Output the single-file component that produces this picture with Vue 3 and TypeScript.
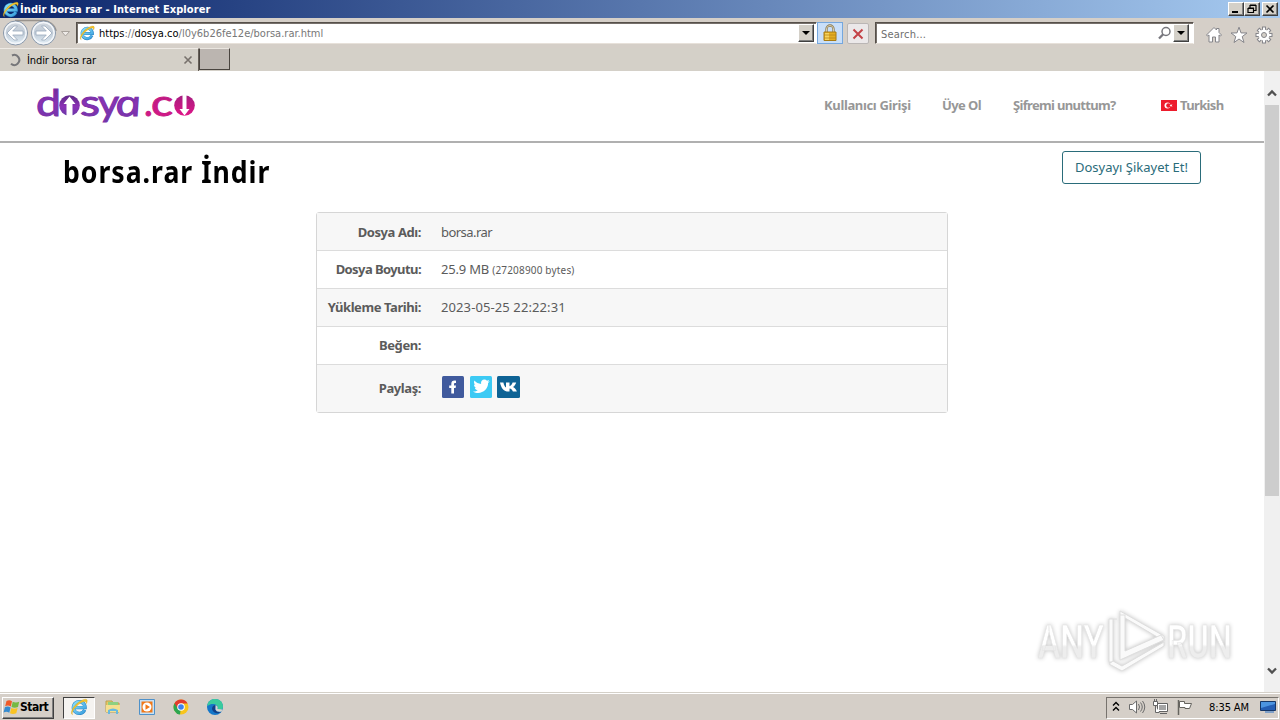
<script setup lang="ts">
interface Row { label: string; value?: string; note?: string; share?: boolean }
const rows: Row[] = [
  { label: 'Dosya Adı:', value: 'borsa.rar' },
  { label: 'Dosya Boyutu:', value: '25.9 MB', note: '(27208900 bytes)' },
  { label: 'Yükleme Tarihi:', value: '2023-05-25 22:22:31' },
  { label: 'Beğen:' },
  { label: 'Paylaş:', share: true },
]
const gearTeeth: number[] = [0, 45, 90, 135, 180, 225, 270, 315]
</script>

<template>
  <svg class="defs" width="0" height="0" aria-hidden="true">
    <defs>
      <linearGradient id="ieBlue" x1="0" y1="0" x2="1" y2="1">
        <stop offset="0" stop-color="#8be0fa" /><stop offset="1" stop-color="#3a9fdf" />
      </linearGradient>
      <symbol id="ie" viewBox="0 0 16 16">
        <path d="M13 10.500A5.200 5.200 0 1 1 13.400 8.600H4.500" fill="none" stroke="#2c85c4" stroke-width="3" />
        <path d="M12.800 10.600A5.100 5.100 0 1 1 13.300 8.500H4.500" fill="none" stroke="url(#ieBlue)" stroke-width="2.200" />
        <path d="M2.200 14.800C-.5 13.500 3 7 8 3.600C11.500 1 15.300.1 15.300 2.500c0 .9-.3 1.700-.8 2.500C14.800 2.200 12 2.600 9 4.700C4 8.200 1.200 12.500 2.200 14.800Z" fill="#f6c52c" stroke="#c99b1b" stroke-width=".3" />
      </symbol>
    </defs>
  </svg>

  <div class="screen">
    <header class="titlebar">
      <svg class="title-icon" width="17" height="17"><use href="#ie" /></svg>
      <span class="title-text">İndir borsa rar - Internet Explorer</span>
      <div class="window-buttons">
        <i class="wbtn"><svg width="12" height="10"><path d="M2 8h6" stroke="#000" stroke-width="2" /></svg></i>
        <i class="wbtn"><svg width="12" height="10"><path d="M4 4V1.500h6V6.500H8M4 1h6M2 4.500h5.500v4H2zM2 4h6" fill="none" stroke="#000" stroke-width="1.200" /></svg></i>
        <i class="wbtn close"><svg width="12" height="10"><path d="M2.500 1.500l7 7m0-7l-7 7" stroke="#000" stroke-width="1.700" /></svg></i>
      </div>
    </header>

    <div class="toolbar">
      <svg class="nav-arrows" width="76" height="30" viewBox="0 0 76 30">
        <defs><linearGradient id="disc" x2="0" y2="1"><stop offset="0" stop-color="#d3d8de" /><stop offset=".5" stop-color="#c0cbd7" /><stop offset="1" stop-color="#e4f0f8" /></linearGradient></defs>
        <path d="M15 2.500H44C49 3 55 7 56 13" fill="none" stroke="#99938d" stroke-width="1.500" />
        <g stroke="#8796a9" fill="url(#disc)"><circle cx="15.500" cy="15" r="12" /><circle cx="43.500" cy="15" r="12" /></g>
        <g stroke="#f3f6fa" fill="none" stroke-width="1.500"><circle cx="15.500" cy="15" r="10.600" /><circle cx="43.500" cy="15" r="10.600" /></g>
        <g fill="#fff" stroke="#9aa9bd" stroke-width=".8">
          <path d="M7 15l7-7h3.500l-4.800 5H23v4H12.700l4.800 5H14z" /><path d="M52 15l-7-7h-3.500l4.800 5H36v4h10.300l-4.800 5H45z" />
        </g>
        <path d="M61.500 13.500h8l-4 4.500z" fill="#eeeae7" stroke="#a9a39d" />
      </svg>
      <div class="address">
        <svg width="16" height="16"><use href="#ie" /></svg>
        <span class="url"><b>https</b>://<b>dosya.co</b>/l0y6b26fe12e/borsa.rar.html</span>
        <i class="drop"></i>
      </div>
      <i class="lock">
        <svg width="16" height="18" viewBox="0 0 16 18"><path d="M4.500 9V5a3.500 3.500 0 0 1 7 0v4" fill="none" stroke="#877854" stroke-width="2.300" /><path d="M4.500 9V5a3.500 3.500 0 0 1 7 0v4" fill="none" stroke="#d9cda9" stroke-width="1" /><path d="M2 8h12v8.500H2z" fill="#e5ae21" stroke="#a77a13" /><path d="M3 9h4v7H3z" fill="#f7d45c" /><path d="M2 11h12M2 14h12" stroke="#b9851a" stroke-width=".8" /></svg>
      </i>
      <i class="stop"><svg width="12" height="12"><path d="M1.500 1.500l9 9m0-9l-9 9" stroke="#c34247" stroke-width="2" /></svg></i>
      <div class="search">
        <span>Search...</span>
        <svg width="15" height="15"><circle cx="9" cy="5.500" r="4" fill="none" stroke="#77777d" stroke-width="1.500" /><path d="M6.200 8.300L2 12.500" stroke="#77777d" stroke-width="2.300" /></svg>
        <i class="drop"></i>
      </div>
      <div class="tools">
        <svg width="18" height="18" viewBox="0 0 18 18"><path d="M1.500 9L9 1.500l2.500 2.500V2.500h2.500v4L16.500 9l-1 1-1.500-1v7H10.500v-5h-3v5H4V9l-1.500 1z" fill="#fff" stroke="#85858a" /></svg>
        <svg width="18" height="18" viewBox="0 0 18 18"><path d="M9 1.200l2 5.700 6 .1-4.800 3.600 1.800 5.900L9 13l-5 3.500 1.800-5.900L1 7l6-.1z" fill="#fff" stroke="#85858a" /></svg>
        <svg width="18" height="18" viewBox="0 0 18 18"><g fill="#fff" stroke="#85858a"><rect v-for="a in gearTeeth" :key="a" x="7.500" y="1" width="3" height="4" :transform="`rotate(${a} 9 9)`" /><circle cx="9" cy="9" r="5.500" stroke="none" /><circle cx="9" cy="9" r="2.500" fill="#d4d0c8" /></g></svg>
      </div>
    </div>

    <div class="tabs">
      <div class="tab">
        <svg width="14" height="14"><path d="M4 2.500A5 5 0 1 1 3 10.800" fill="none" stroke="#77777a" stroke-width="2" /></svg>
        <span>İndir borsa rar</span>
        <svg class="tab-close" width="10" height="10"><path d="M1.500 1.500l7 7m0-7l-7 7" stroke="#77716c" stroke-width="1.600" /></svg>
      </div>
      <div class="new-tab"></div>
    </div>

    <div class="viewport">
      <div class="page">
        <div class="site-head">
          <svg class="logo" width="162" height="38" viewBox="0 0 162 38" role="img" aria-label="dosya.co">
            <defs>
              <linearGradient id="violet" x2="0" y2="1"><stop offset="0" stop-color="#5e2a86" /><stop offset=".55" stop-color="#8b31b6" /><stop offset="1" stop-color="#6939a6" /></linearGradient>
              <linearGradient id="pink" x2="0" y2="1"><stop offset="0" stop-color="#a51d80" /><stop offset="1" stop-color="#df1688" /></linearGradient>
            </defs>
            <g class="letters violet">
              <text x="1" y="28.500" textLength="25" lengthAdjust="spacingAndGlyphs">d</text>
              <text x="45" y="28.500" textLength="20" lengthAdjust="spacingAndGlyphs">s</text>
              <text x="63" y="28.500" textLength="21" lengthAdjust="spacingAndGlyphs">y</text>
              <text class="round-a" transform="translate(82 28.500) skewX(12)" textLength="26" lengthAdjust="spacingAndGlyphs">a</text>
            </g>
            <g class="letters pink">
              <text x="109" y="28.500">.</text>
              <text x="116" y="28.500" textLength="22" lengthAdjust="spacingAndGlyphs">c</text>
            </g>
            <circle cx="34.500" cy="18.500" r="10.300" fill="url(#violet)" />
            <path d="M34.500 9.500l6 7.500h-3v12h-6V17h-3z" fill="#fff" />
            <circle cx="149.500" cy="18.500" r="10.300" fill="url(#pink)" />
            <path d="M147.500 8h4v14h3l-5 6.500-5-6.500h3z" fill="#fff" />
          </svg>
          <nav>
            <a class="login">Kullanıcı Girişi</a><a class="join">Üye Ol</a><a class="forgot">Şifremi unuttum?</a>
            <a class="lang"><svg width="16" height="11"><path d="M0 0h16v11H0z" fill="#ed1c2c" /><circle cx="6.500" cy="5.500" r="3" fill="#fff" /><circle cx="7.400" cy="5.500" r="2.200" fill="#ed1c2c" /><path d="M8.500 5.500l3-1.300-.8 1.300.8 1.300z" fill="#fff" /></svg>Turkish</a>
          </nav>
        </div>
        <div class="heading"><h1>borsa.rar İndir</h1><button>Dosyayı Şikayet Et!</button></div>
        <div class="info">
          <div v-for="(row, i) in rows" :key="row.label" :class="['row', 'r' + i, { alt: i % 2 === 0, tall: row.share }]">
            <strong>{{ row.label }}</strong>
            <span v-if="row.value" class="value">{{ row.value }} <small v-if="row.note">{{ row.note }}</small></span>
            <div v-if="row.share" class="share">
              <svg width="24" height="24"><rect x="1" y="1" width="22" height="22" rx="1.500" fill="#405a9d" /><path d="M10.300 18.500V13H8.200v-2.500h2.100V9c0-2.600 1.400-3.700 4.700-3.300V8c-1.500-.1-2 .1-2 1.200v1.300h2l-.4 2.500H13v5.500z" fill="#fff" /></svg>
              <svg width="24" height="24"><rect x="1" y="1" width="22" height="22" rx="1.500" fill="#3ccaf4" /><path d="M4 16.500c2 .2 3.500-.3 4.800-1.300-1.500-.1-2.400-.9-2.900-2.200h1.400C5.700 12.300 5 11.100 5 9.500l1.300.4C5 8.700 4.600 7.100 5.500 5.500c1.800 2.100 3.900 3.200 6.600 3.400-.5-2.500 1.100-4.300 3.300-4.300 1 0 1.900.4 2.600 1.100l2.300-.9-1.500 2 2-.5-1.700 1.800c.2 6.800-7.900 12.900-15.100 8.400z" fill="#fff" /></svg>
              <svg width="24" height="24"><rect x="0" y="1" width="23" height="22" rx="1.500" fill="#0e6395" /><path d="M3 7.500h3.400c.5 2.400 1.300 4 2.600 5V7.500h3.500v3.800c1.300-.3 2.400-1.800 3.100-3.800h3.600c-.5 1.900-1.600 3.500-3.200 4.500 1.800.9 3 2.400 3.900 4.500h-4c-.6-1.600-1.600-2.700-3.400-3v3C7.300 17 4.200 13.700 3 7.500z" fill="#fff" /></svg>
            </div>
          </div>
        </div>
        <svg class="watermark" width="208" height="72" viewBox="0 0 208 72">
          <defs><linearGradient id="fade" x2="0" y2="1"><stop offset=".55" stop-color="#fff" /><stop offset=".6" stop-color="#ededed" /></linearGradient></defs>
          <g class="mark-text"><text x="9" y="54" textLength="66" lengthAdjust="spacingAndGlyphs">ANY</text><text x="138" y="54" textLength="65" lengthAdjust="spacingAndGlyphs">RUN</text></g>
          <g class="mark-lines">
            <path d="M91 7L135 32v5L91 11z" /><path d="M91 11h5v36l36-16 3 5-44 20z" /><path d="M84 15h-4v43h4zM84 15h4" /><path d="M80 60l13 7 42-25v-4L93 62l-9-5z" />
          </g>
        </svg>
      </div>
      <div class="scrollbar">
        <svg width="16" height="34"><path d="M4 24.500l4-4 4 4" fill="none" stroke="#505050" stroke-width="2.300" /></svg>
        <i></i>
        <svg class="down" width="16" height="34"><path d="M4 10.500l4 4 4-4" fill="none" stroke="#505050" stroke-width="2.300" /></svg>
      </div>
    </div>

    <footer class="taskbar">
      <div class="start">
        <svg width="17" height="17" viewBox="0 0 17 17"><path d="M3.500 2q3-1.500 5.500.3L7.800 7.500Q5 5.800 2.200 7.300z" fill="#f05a28" /><path d="M9.700 2.700q3 1.500 6.500 0L15 8q-3.500 1.500-6.500 0z" fill="#75b943" /><path d="M1.900 8.200q3-1.500 5.700.3L6.300 13.700Q3.500 12 .6 13.500z" fill="#368bd0" /><path d="M8.300 8.900q3 1.500 6.300 0l-1.300 5.300q-3.500 1.500-6.300 0z" fill="#fac323" /></svg>
        <span>Start</span>
      </div>
      <div class="task active"><svg width="18" height="18"><use href="#ie" /></svg></div>
      <div class="task"><svg width="18" height="18"><path d="M2 3h6l1 2h6v9H2z" fill="#e8c864" stroke="#baa04f" /><path d="M4 4h10v5H4z" fill="#8ed080" /><path d="M2 7h14v7H2z" fill="#f5df8e" /><path d="M4 16v-4q5-3 10 0v4h-2v-3H6v3z" fill="#69b9de" /></svg></div>
      <div class="task"><svg width="18" height="18"><path d="M1.500 1.500h15v15h-15z" fill="#c7e1f5" stroke="#4e91c9" /><path d="M3.500 3.500h11v11h-11z" fill="#f17818" /><circle cx="9" cy="9" r="4.500" fill="#fff" /><path d="M7.500 6.200l4.500 2.800-4.500 2.800z" fill="#f17818" /></svg></div>
      <div class="task"><svg width="18" height="18"><circle cx="9" cy="9" r="7.500" fill="#f8c51c" /><path d="M9 9L2.500 5.200A7.500 7.500 0 0 0 8 16.500z" fill="#2ca650" /><path d="M2.500 5.200A7.500 7.500 0 0 1 15.600 5.500H9L6 11z" fill="#e23b2e" /><circle cx="9" cy="9" r="3.800" fill="#fff" /><circle cx="9" cy="9" r="2.800" fill="#3e82ee" /></svg></div>
      <div class="task"><svg width="18" height="18"><circle cx="9" cy="9" r="8" fill="#1477c9" /><path d="M1.200 8C2 3 5 1 9 1c5 0 8 3.500 8 7.500 0 3-2.500 4-5.500 3.500C14 7 7 3.500 1.200 8z" fill="#3acb9d" /><path d="M10 7c-5 0-5.500 6.500 0 8 2 .5 4 0 5.500-1-2 .7-5-.2-6-2-.8-1.300.5-2 .5-5z" fill="#123f86" /><path d="M9.500 7q3 1 2 4l5 .5-1 2q-5 1-6-2z" fill="#d8d6d0" /></svg></div>
      <div class="tray">
        <svg class="chev" width="8" height="12"><path d="M1 4.500l3-3 3 3M1 9.500l3-3 3 3" fill="none" stroke="#000" stroke-width="1.400" /></svg>
        <svg class="sound" width="18" height="16"><path d="M1.500 5.500h3L8.500 2v12l-4-3.500h-3z" fill="#fff" stroke="#6b6b6b" /><path d="M10.500 5q2 3 0 6M12.500 3.500q3.500 4.500 0 9M14.500 2q4.500 6 0 12" fill="none" stroke="#6b6b6b" /></svg>
        <svg class="net" width="17" height="17"><path d="M5.500 4.500h10v8h-10zM8 14.500h7" fill="#fff" stroke="#626262" /><path d="M7 6h7v5H7z" fill="#a4a4a4" /><path d="M1.500 2.500h4v4h-4zM2.500 0v3m2-3v3M3.500 7v6.500h4" fill="#fff" stroke="#666" /></svg>
        <svg class="flag" width="17" height="17"><path d="M2.500 1v15" stroke="#66645f" stroke-width="1.500" /><path d="M3.500 2.500h5v2h7l-2 5H9v-1H3.500z" fill="#fff" stroke="#66645f" /></svg>
        <span class="clock">8:35 AM</span>
        <svg class="desktop" width="16" height="14"><path d="M.5 1.500h15v9H.5z" fill="#245db3" stroke="#163767" /><path d="M1 2h14v2L1 8z" fill="#4c94e0" /><path d="M5 12h9" stroke="#7fa0c8" stroke-width="2" /></svg>
      </div>
    </footer>
  </div>
</template>

<style>
html, body { margin: 0; overflow: hidden; }
</style>
<style scoped>
* { box-sizing: border-box; }
svg { display: block; flex: none; }
.defs { position: absolute; }
.screen { width: 1280px; height: 720px; display: flex; flex-direction: column; overflow: hidden; background: #d4d0c8; color: #000; font: 11px "DejaVu Sans Condensed", "DejaVu Sans", sans-serif; white-space: nowrap; }
.titlebar { height: 18px; flex: none; display: flex; align-items: center; padding: 0 2px; background: linear-gradient(90deg, #0a246a, #a6caf0); color: #fff; }
.title-text { margin-left: 1px; font-size: 11px; font-weight: bold; letter-spacing: .08px; }
.window-buttons { margin-left: auto; display: flex; }
.wbtn { width: 16px; height: 14px; display: flex; align-items: center; justify-content: center; background: #d4d0c8; border: 1px solid; border-color: #fff #404040 #404040 #fff; box-shadow: inset -1px -1px #808080; }
.close { margin-left: 2px; }
.toolbar { height: 30px; flex: none; display: flex; align-items: flex-start; background: #d5cfc8; }
.address, .search { height: 22px; margin-top: 4px; display: flex; align-items: center; background: #fff; border: 1px solid; border-color: #56504a #fff #e7e1da #56504a; box-shadow: inset 1px 1px #76706b; }
.address { width: 741px; padding-left: 2px; }
.url { margin: 1px 0 0 4px; color: #777; }
.url b { font-weight: normal; color: #000; }
.drop { width: 16px; height: 18px; margin-left: auto; margin-right: 2px; display: flex; align-items: center; justify-content: center; background: #d4d0c8; border: 1px solid; border-color: #fff #404040 #404040 #fff; box-shadow: inset -1px -1px #808080; }
.drop::after { content: ""; border: 4px solid transparent; border-top-color: #000; border-bottom: 0; }
.lock { width: 26px; height: 22px; margin: 4px 0 0; display: grid; place-items: center; background: #c9dff9; border: 1px solid #75a7de; }
.stop { width: 22px; height: 21px; margin: 5px 0 0 4px; display: grid; place-items: center; background: #ebe8e9; border: 1px solid #bab6b5; border-radius: 2px; }
.search { width: 319px; margin-left: 6px; padding-left: 5px; color: #6e6e6e; }
.search span { margin-top: 2px; letter-spacing: .2px; }
.search > svg { margin-left: auto; }
.search .drop { margin-left: 1px; margin-right: 4px; }
.tools { display: flex; gap: 7px; margin: 8px 0 0 11px; }
.tabs { height: 23px; display: flex; flex: none; }
.tab { width: 199px; display: flex; align-items: center; padding-left: 8px; border-top: 1px solid #eeeae5; border-right: 1px solid #665f58; }
.tab span { margin-left: 5px; letter-spacing: -.1px; }
.tab-close { margin-left: auto; margin-right: 5px; }
.new-tab { width: 31px; height: 22px; border: 1px solid #49443f; border-top-color: #e9e5df; background: #bbb5b0; }
.viewport { height: 621px; flex: none; display: flex; background: #fff; }
.page { width: 1264px; position: relative; font-family: "Noto Sans", "Open Sans", sans-serif; color: #5b5b5b; }
.site-head { height: 72px; padding: 16px 0 0 35px; display: flex; border-bottom: 2px solid #b0b0b0; }
.logo { overflow: visible; }
.letters { font: 400 37px/1 Lato, sans-serif; stroke-width: 1; }
.violet { fill: url(#violet); stroke: #7b31aa; }
.pink { fill: url(#pink); stroke: #c71b86; }
.round-a { font: italic 400 35px/1 "Open Sans", sans-serif; }
nav { display: flex; height: 36px; align-items: center; margin-left: 627px; color: #979797; font-size: 13px; font-weight: bold; }
.login { width: 118px; letter-spacing: -.35px; }
.join { width: 71px; letter-spacing: -.6px; }
.forgot { width: 148px; letter-spacing: -.68px; }
.lang { display: flex; align-items: center; gap: 3px; letter-spacing: -.65px; }
.heading { height: 69px; display: flex; justify-content: space-between; align-items: flex-start; padding: 8px 63px 0; }
h1 { margin: -2px 0 0; font-size: 30px; line-height: 46px; letter-spacing: 1.1px; color: #000; transform: scaleX(.888); transform-origin: 0 0; }
button { width: 139px; height: 33px; padding: 0 0 2px; background: #fff; border: 1px solid #2a6c7a; border-radius: 3px; color: #2a6c7a; font: 13px "Noto Sans", sans-serif; }
.info { width: 632px; margin-left: 316px; border: 1px solid #d6d6d6; border-radius: 3px; }
.row { height: 38px; display: flex; align-items: center; font-size: 13px; padding-bottom: 1px; }
.row + .row { border-top: 1px solid #dcdcdc; }
.alt { background: #f7f7f7; }
.row.r0 { height: 37px; padding: 1px 0 0; }
.row.tall { height: 48px; }
.row strong { width: 104px; text-align: right; font-size: 13px; letter-spacing: -.42px; }
.row.r1 strong { letter-spacing: -.58px; }
.value { margin-left: 20px; }
.r0 .value { letter-spacing: -.55px; }
.r1 .value { letter-spacing: -.2px; }
.r2 .value { letter-spacing: .1px; }
small { font-size: 10px; letter-spacing: .18px; }
.share { display: flex; gap: 4px; margin: -2px 0 0 20px; }
.watermark { position: absolute; right: 27px; bottom: 16px; overflow: visible; filter: drop-shadow(0 0 2px #c4c4c4); }
.mark-text { font: 500 47px/1 Roboto, sans-serif; fill: url(#fade); stroke: #e4e4e4; stroke-width: .6; }
.mark-lines { fill: #fafafa; stroke: #dedede; stroke-width: 1; }
.scrollbar { width: 16px; background: #f0f0f0; display: flex; flex-direction: column; }
.scrollbar i { height: 391px; margin: 0 0 0 1px; background: #cdcdcd; width: 14px; }
.down { margin-top: auto; }
.taskbar { height: 28px; flex: none; display: flex; align-items: center; padding: 2px 2px 0; border-top: 1px solid #d4d0c8; box-shadow: inset 0 1px #fff; background: #d5cfc8; }
.start { width: 52px; height: 22px; display: flex; align-items: center; border: 1px solid; border-color: #fff #404040 #404040 #fff; box-shadow: inset -1px -1px #808080; padding: 0 0 1px; font-size: 12px; font-weight: bold; }
.start span { letter-spacing: -.5px; }
.task { width: 34px; height: 22px; padding-bottom: 1px; display: grid; place-items: center; }
.active { width: 32px; margin: 0 1px 0 9px; background: #f5f3f0; border: 1px solid; border-color: #404040 #fff #fff #404040; }
.tray { height: 22px; width: 173px; margin-left: auto; margin-right: -1px; display: flex; align-items: center; border: 1px solid; border-color: #77736e #fff #fff #77736e; padding-left: 5px; padding-bottom: 1px; }
.sound { margin-left: 8px; }.net { margin-left: 6px; }.flag { margin-left: 7px; }
.clock { margin-left: 16px; letter-spacing: -.1px; }
.desktop { margin-left: auto; margin-right: 2px; }
</style>
